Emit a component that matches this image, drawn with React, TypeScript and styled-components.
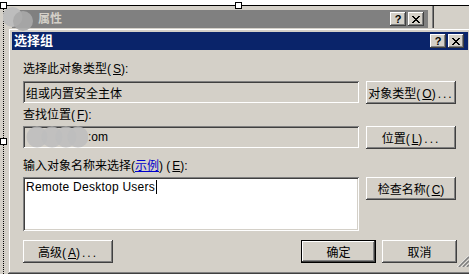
import React from "react"
import styled, { createGlobalStyle } from "styled-components"

const GlobalStyle = createGlobalStyle`
  html, body {
    margin: 0;
    padding: 0;
    background: #d4d0c8;
  }
  body {
    font-family: "Liberation Sans", "Noto Sans CJK SC", sans-serif;
    font-size: 12px;
    color: #000;
  }
`

const raised = `inset -1px -1px #404040, inset 1px 1px #fff, inset -2px -2px #808080`
const sunken = `inset 1px 1px #808080, inset -1px -1px #fff, inset 2px 2px #404040, inset -2px -2px #d4d0c8`

const Screen = styled.div`
  position: relative;
  width: 469px;
  height: 274px;
  overflow: hidden;
  background: #d4d0c8;
  display: flex;
  flex-direction: column;
`

const SelectionTop = styled.div`
  flex: none;
  height: 5px;
  background: #fff;
  border-bottom: 1px solid #000;
`

const Main = styled.div`
  flex: 1;
  min-height: 0;
  display: flex;
`

const Gutter = styled.div`
  flex: none;
  width: 4px;
  margin-left: 3px;
  border-left: 1px dotted #000;
`

const Stack = styled.div`
  flex: 1;
  min-width: 0;
  display: flex;
  flex-direction: column;
`

const BackRow = styled.div`
  flex: none;
  height: 22px;
  display: flex;
`

const BackWindow = styled.div`
  width: 416px;
  padding: 4px 6px 0 4px;
  box-shadow: inset -1px 0 #404040, inset -2px 0 #808080;
`

const TitleBar = styled.div<{ $active?: boolean }>`
  height: 18px;
  display: flex;
  align-items: center;
  background: ${p => (p.$active ? "#0a246a" : "#808080")};
  color: ${p => (p.$active ? "#fff" : "#d4d0c8")};
  font-weight: bold;
  font-size: ${p => (p.$active ? 13 : 12)}px;
  padding: 0 4px 0 ${p => (p.$active ? 2 : 26)}px;
`

const TitleText = styled.span`
  flex: 1;
  line-height: 18px;
`

const CaptionButtons = styled.div`
  display: flex;
  gap: 2px;
`

const CaptionButton = styled.span`
  width: 16px;
  height: 14px;
  display: flex;
  align-items: center;
  justify-content: center;
  background: #d4d0c8;
  box-shadow: ${raised};
  color: #000;
  font: bold 11px "Liberation Sans", sans-serif;
`

const Dialog = styled.div`
  flex: 1;
  width: 456px;
  padding: 4px;
  display: flex;
  flex-direction: column;
  box-shadow: inset -1px -1px #404040, inset 1px 1px #d4d0c8, inset -2px -2px #808080, inset 2px 2px #fff;
`

const Body = styled.div`
  position: relative;
  flex: 1;
  padding: 11px 11px 0;
  display: flex;
  flex-direction: column;
`

const Label = styled.div<{ $gap: number }>`
  height: 16px;
  line-height: 16px;
  margin-top: ${p => p.$gap}px;
  white-space: nowrap;
`

const Key = styled.span`
  text-decoration: underline;
  margin-left: 2px;
`

const Dots = styled.span`
  letter-spacing: 2px;
  margin-left: 2px;
`

const Link = styled.span`
  color: #0000cc;
  text-decoration: underline;
`

const Row = styled.div<{ $gap: number }>`
  display: flex;
  align-items: flex-start;
  gap: 7px;
  margin-top: ${p => p.$gap}px;
`

const Field = styled.div<{ $white?: boolean; $height: number }>`
  width: 336px;
  height: ${p => p.$height}px;
  box-sizing: border-box;
  display: flex;
  align-items: ${p => (p.$white ? "flex-start" : "center")};
  padding: ${p => (p.$white ? "3px 3px" : "0 3px")};
  background: ${p => (p.$white ? "#fff" : "#d4d0c8")};
  box-shadow: ${sunken};
  letter-spacing: ${p => (p.$white ? 0.25 : 0)}px;
  white-space: nowrap;
  overflow: hidden;
`

const Caret = styled.span`
  display: inline-block;
  width: 1px;
  height: 14px;
  background: #000;
  margin-left: 1px;
`

const Button = styled.button<{ $w: number; $default?: boolean }>`
  width: ${p => p.$w}px;
  height: 23px;
  padding: 0;
  border: none;
  background: #d4d0c8;
  color: #000;
  font: inherit;
  white-space: nowrap;
  box-shadow: ${p =>
    p.$default
      ? "inset 0 0 0 1px #000, inset -2px -2px #404040, inset 2px 2px #fff, inset -3px -3px #808080"
      : raised};
`

const BottomRow = styled.div`
  display: flex;
  gap: 6px;
  margin-top: 9px;
`

const Spacer = styled.div`
  flex: 1;
`

const Grip = styled.svg`
  position: absolute;
  right: -1px;
  bottom: 3px;
`

const Handle = styled.div<{ $x: number; $y: number }>`
  position: absolute;
  left: ${p => p.$x}px;
  top: ${p => p.$y}px;
  width: 5px;
  height: 5px;
  background: #fff;
  border: 1px solid #000;
`

const BlurMark = styled.svg`
  position: absolute;
  left: 3px;
  top: 6px;
`

const closePixels: [number, number, number][] = [
  [0, 0, 2], [6, 0, 2],
  [1, 1, 2], [5, 1, 2],
  [2, 2, 4],
  [3, 3, 2],
  [2, 4, 4],
  [1, 5, 2], [5, 5, 2],
  [0, 6, 2], [6, 6, 2],
]

function CloseGlyph() {
  return (
    <svg width="8" height="7" viewBox="0 0 8 7" shapeRendering="crispEdges">
      {closePixels.map(([x, y, w], i) => (
        <rect key={i} x={x} y={y} width={w} height={1} fill="#000" />
      ))}
    </svg>
  )
}

function Captions() {
  return (
    <CaptionButtons>
      <CaptionButton>?</CaptionButton>
      <CaptionButton>
        <CloseGlyph />
      </CaptionButton>
    </CaptionButtons>
  )
}

function Redacted() {
  return (
    <svg width="62" height="22" viewBox="0 0 62 22">
      {[11, 26, 40, 52].map(cx => (
        <circle key={cx} cx={cx} cy={11} r={10.5} fill="#bdbdbd" opacity={0.85} />
      ))}
    </svg>
  )
}

export default function App() {
  return (
    <>
      <GlobalStyle />
      <Screen>
        <SelectionTop />
        <Main>
          <Gutter />
          <Stack>
            <BackRow>
              <BackWindow>
                <TitleBar>
                  <TitleText>属性</TitleText>
                  <Captions />
                </TitleBar>
              </BackWindow>
            </BackRow>
            <Dialog>
              <TitleBar $active>
                <TitleText>选择组</TitleText>
                <Captions />
              </TitleBar>
              <Body>
                <Label $gap={0}>
                  选择此对象类型(<Key>S</Key>):
                </Label>
                <Row $gap={4}>
                  <Field $height={22}>组或内置安全主体</Field>
                  <Button $w={90}>
                    对象类型(<Key>O</Key>)<Dots>...</Dots>
                  </Button>
                </Row>
                <Label $gap={3}>
                  查找位置(<Key>F</Key>):
                </Label>
                <Row $gap={3}>
                  <Field $height={22}>
                    <Redacted />
                    :om
                  </Field>
                  <Button $w={90}>
                    位置(<Key>L</Key>)<Dots>...</Dots>
                  </Button>
                </Row>
                <Label $gap={9}>
                  输入对象名称来选择(<Link>示例</Link>) (<Key>E</Key>):
                </Label>
                <Row $gap={3}>
                  <Field $white $height={54}>
                    Remote Desktop Users
                    <Caret />
                  </Field>
                  <Button $w={90}>
                    检查名称(<Key>C</Key>)
                  </Button>
                </Row>
                <BottomRow>
                  <Button $w={90}>
                    高级(<Key>A</Key>)<Dots>...</Dots>
                  </Button>
                  <Spacer />
                  <Button $w={75} $default>
                    确定
                  </Button>
                  <Button $w={75}>取消</Button>
                </BottomRow>
                <Grip width="12" height="12" viewBox="0 0 12 12">
                  {[0, 4, 8].map(o => (
                    <g key={o}>
                      <line x1={o + 0.5} y1={12} x2={12} y2={o + 0.5} stroke="#fff" strokeWidth={1} />
                      <line x1={o + 1.8} y1={12} x2={12} y2={o + 1.8} stroke="#808080" strokeWidth={1.6} />
                    </g>
                  ))}
                </Grip>
              </Body>
            </Dialog>
          </Stack>
        </Main>
        <BlurMark width="30" height="26" viewBox="0 0 30 26">
          <circle cx="9.5" cy="11" r="10" fill="#bdbdbd" />
          <circle cx="20" cy="15" r="10" fill="#a9a9a9" opacity={0.9} />
        </BlurMark>
        <Handle $x={0} $y={2} />
        <Handle $x={235} $y={2} />
        <Handle $x={0} $y={138} />
      </Screen>
    </>
  )
}
